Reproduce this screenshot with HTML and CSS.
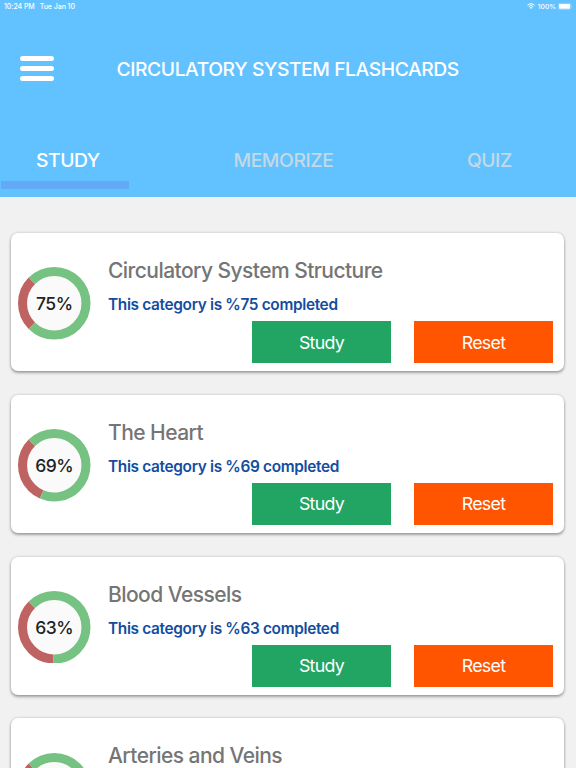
FILE: index.html
```html
<!DOCTYPE html>
<html lang="en">
<head>
  <meta charset="UTF-8">
  <meta name="viewport" content="width=device-width, initial-scale=1.0">
  <title>Circulatory System Flashcards</title>
  <link rel="stylesheet" href="styles.css">
</head>
<body>

  <header>
    <div class="status-bar">
      <span class="time">10:24 PM</span>
      <span class="date">Tue Jan 10</span>
      <svg class="wifi" viewBox="0 0 16 12">
        <path d="M1 4.4a9.9 9.9 0 0 1 14 0M3.4 7.2a6.5 6.5 0 0 1 9.2 0" fill="none" stroke="#fff" stroke-width="2"/>
        <path d="M8 11.8L5.4 9.2a3.7 3.7 0 0 1 5.2 0z" fill="#fff"/>
      </svg>
      <span class="percent">100%</span>
      <svg class="battery" viewBox="0 0 15 7">
        <rect x="0.3" y="0.3" width="12.6" height="6.2" rx="1.8" fill="none" stroke="#fff" stroke-opacity="0.5" stroke-width="0.5"/>
        <rect x="1" y="1" width="11.2" height="4.8" rx="1" fill="#fff"/>
        <path d="M13.5 2.4q1 1 0 2z" fill="#fff" fill-opacity="0.5"/>
      </svg>
    </div>
    <div class="title-bar">
      <button class="menu" aria-label="Menu"><span></span><span></span><span></span></button>
      <h1>CIRCULATORY SYSTEM FLASHCARDS</h1>
    </div>
    <nav>
      <a class="tab study active">STUDY</a>
      <a class="tab memorize">MEMORIZE</a>
      <a class="tab quiz">QUIZ</a>
    </nav>
  </header>

  <main>
    <section class="card">
      <div class="progress">
        <svg viewBox="0 0 72 72">
          <circle class="left" cx="36" cy="36" r="31.5" pathLength="100" stroke-dasharray="25 75" stroke-dashoffset="-75"/>
          <circle class="done" cx="36" cy="36" r="31.5" pathLength="100" stroke-dasharray="75 25"/>
        </svg>
        <span>75%</span>
      </div>
      <div class="info">
        <h2>Circulatory System Structure</h2>
        <p>This category is %75 completed</p>
        <div class="buttons">
          <button class="btn green">Study</button>
          <button class="btn orange">Reset</button>
        </div>
      </div>
    </section>

    <section class="card">
      <div class="progress">
        <svg viewBox="0 0 72 72">
          <circle class="left" cx="36" cy="36" r="31.5" pathLength="100" stroke-dasharray="31 69" stroke-dashoffset="-69"/>
          <circle class="done" cx="36" cy="36" r="31.5" pathLength="100" stroke-dasharray="69 31"/>
        </svg>
        <span>69%</span>
      </div>
      <div class="info">
        <h2>The Heart</h2>
        <p>This category is %69 completed</p>
        <div class="buttons">
          <button class="btn green">Study</button>
          <button class="btn orange">Reset</button>
        </div>
      </div>
    </section>

    <section class="card">
      <div class="progress">
        <svg viewBox="0 0 72 72">
          <circle class="left" cx="36" cy="36" r="31.5" pathLength="100" stroke-dasharray="37 63" stroke-dashoffset="-63"/>
          <circle class="done" cx="36" cy="36" r="31.5" pathLength="100" stroke-dasharray="63 37"/>
        </svg>
        <span>63%</span>
      </div>
      <div class="info">
        <h2>Blood Vessels</h2>
        <p>This category is %63 completed</p>
        <div class="buttons">
          <button class="btn green">Study</button>
          <button class="btn orange">Reset</button>
        </div>
      </div>
    </section>

    <section class="card">
      <div class="progress">
        <svg viewBox="0 0 72 72">
          <circle class="left" cx="36" cy="36" r="31.5" pathLength="100" stroke-dasharray="30 70" stroke-dashoffset="-70"/>
          <circle class="done" cx="36" cy="36" r="31.5" pathLength="100" stroke-dasharray="70 30"/>
        </svg>
      </div>
      <div class="info">
        <h2>Arteries and Veins</h2>
      </div>
    </section>
  </main>

</body>
</html>
```
FILE: styles.css
```css
* {
  box-sizing: border-box;
}
body {
  margin: 0;
  height: 768px;
  overflow: hidden;
  background-color: #f1f1f1;
  font-family: Inter, "Liberation Sans", sans-serif;
}
header {
  height: 196.5px;
  background-color: #62c2ff;
  color: #fff;
}
.status-bar {
  display: flex;
  align-items: center;
  height: 12px;
  padding: 0 3px 0 4px;
  font-size: 7px;
  font-weight: 500;
  letter-spacing: -0.05px;
}
.date {
  margin-left: 5px;
}
.wifi {
  width: 8px;
  height: 6px;
  margin-left: auto;
}
.percent {
  margin-left: 3px;
  font-size: 6.8px;
}
.battery {
  width: 15px;
  height: 7px;
  margin-left: 2px;
}
.title-bar {
  display: flex;
  align-items: center;
  height: 113px;
  padding-left: 20px;
}
.menu {
  display: flex;
  flex-direction: column;
  gap: 5px;
  width: 34px;
  padding: 0;
  border: none;
  background: none;
}
.menu span {
  height: 5px;
  width: 34px;
  border-radius: 2.5px;
  background-color: #fff;
}
h1 {
  margin: 0 0 0 62.5px;
  font-size: 19.3px;
  font-weight: 500;
  letter-spacing: -0.43px;
  white-space: nowrap;
}
nav {
  display: flex;
  height: 64px;
  padding-left: 1px;
}
.tab {
  height: 64px;
  padding-top: 23px;
  border-bottom: 8px solid transparent;
  font-size: 19.3px;
  font-weight: 500;
  line-height: 24px;
  letter-spacing: -0.43px;
  color: #c3d9e6;
}
.tab.active {
  color: #fff;
  border-color: #62a9f6;
}
.study {
  width: 128px;
  padding-left: 35px;
}
.memorize {
  margin-left: 104.5px;
}
.quiz {
  margin-left: 133.5px;
}
main {
  height: 571.5px;
  padding: 36.5px 12px 0 11px;
  overflow: hidden;
}
.card {
  display: flex;
  height: 138px;
  margin-bottom: 23.8px;
  padding-left: 7px;
  border-radius: 7px;
  background-color: #fff;
  box-shadow: 0 0 3px rgba(0,0,0,0.2), 0 2px 3px rgba(0,0,0,0.3);
}
.progress {
  display: grid;
  place-items: center;
  width: 72.5px;
  height: 72.5px;
  margin-top: 34.4px;
}
.progress svg, .progress span {
  grid-area: 1 / 1;
}
.progress svg {
  width: 72.5px;
  height: 72.5px;
}
.progress span {
  font-size: 17.5px;
  font-weight: 500;
  letter-spacing: -0.5px;
  color: #222;
}
circle {
  stroke-width: 9;
  transform: rotate(-135deg);
  transform-origin: center;
}
.left {
  fill: #fafafa;
  stroke: #be6362;
}
.done {
  fill: none;
  stroke: #76c282;
}
.info {
  flex: 1;
  padding: 24px 11px 0 17.5px;
}
h2 {
  margin: 0;
  font-size: 21px;
  font-weight: 500;
  line-height: 28px;
  letter-spacing: -0.55px;
  color: #757575;
}
p {
  margin: 9px 0 5px;
  font-size: 15.4px;
  font-weight: 600;
  line-height: 22px;
  letter-spacing: -0.33px;
  color: #134d9f;
}
.buttons {
  display: flex;
  justify-content: flex-end;
  gap: 23px;
}
.btn {
  width: 139px;
  height: 42px;
  padding: 0;
  border: none;
  font-family: inherit;
  font-size: 17.8px;
  letter-spacing: -0.7px;
  color: #fff;
}
.green {
  background-color: #22a463;
}
.orange {
  background-color: #ff5500;
}
```
